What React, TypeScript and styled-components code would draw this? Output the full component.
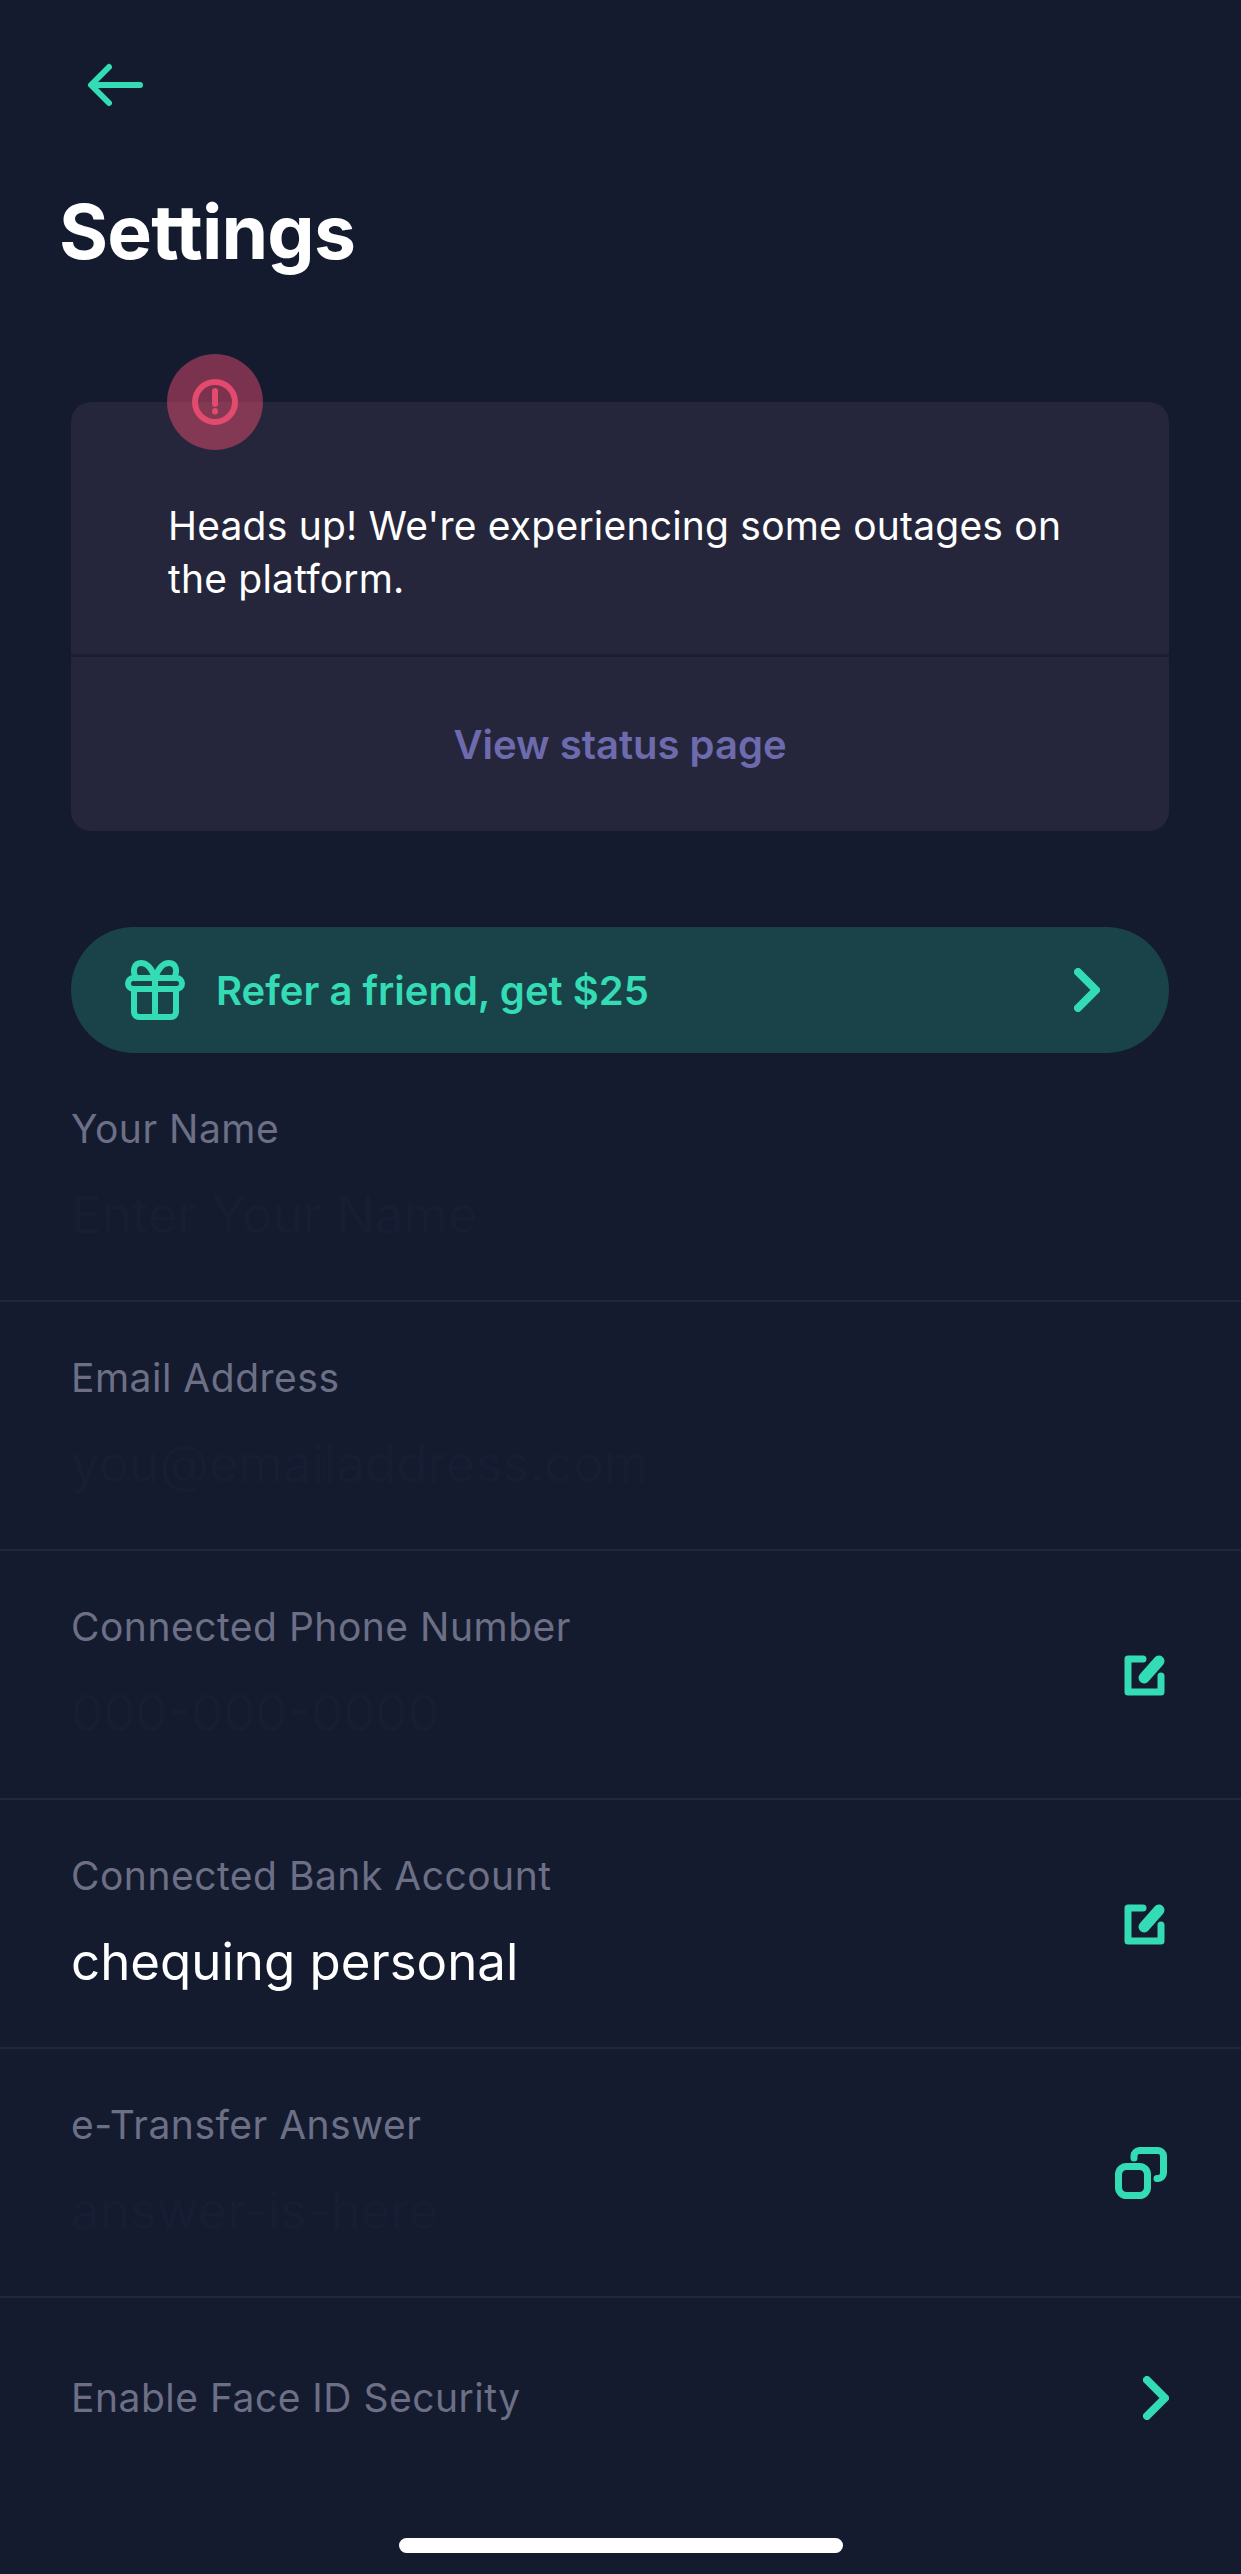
import React, { FC } from "react";
import styled, { createGlobalStyle } from "styled-components";

const colors = {
  bg: "#141b2f",
  card: "#25263b",
  line: "#24273c",
  teal: "#33dcb4",
  pill: "#1a4349",
  label: "#6c6f85",
  hidden: "#171d32",
  link: "#6d6bae",
  pink: "#e24a6e",
};

const GlobalStyle = createGlobalStyle`
  html, body {
    margin: 0;
    padding: 0;
    background: ${colors.bg};
  }
  body {
    font-family: "Inter", "Liberation Sans", sans-serif;
  }
`;

const Page = styled.div`
  width: 1241px;
  height: 2574px;
  overflow: hidden;
  display: flex;
  flex-direction: column;
  background: ${colors.bg};
`;

const BackButton = styled.button`
  display: block;
  align-self: flex-start;
  border: none;
  background: none;
  padding: 0;
  margin: 61px 0 0 86px;
  height: 48px;
`;

const Title = styled.h1`
  margin: 78px 0 0 59px;
  color: #fff;
  font-size: 75px;
  line-height: 90px;
  font-weight: 700;
  letter-spacing: -0.8px;
`;

const Alert = styled.section`
  position: relative;
  margin: 125px 72px 0 71px;
  background: ${colors.card};
  border-radius: 20px;
`;

const AlertBadge = styled.div`
  position: absolute;
  left: 96px;
  top: -48px;
  width: 96px;
  height: 96px;
  border-radius: 50%;
  background: rgba(226, 74, 110, 0.5);
  display: flex;
  align-items: center;
  justify-content: center;
`;

const AlertText = styled.p`
  margin: 0;
  height: 252px;
  box-sizing: border-box;
  padding: 97px 90px 0 97px;
  color: #fff;
  font-size: 39px;
  line-height: 53px;
  font-weight: 400;
  letter-spacing: 0.2px;
`;

const AlertAction = styled.div`
  height: 174px;
  border-top: 3px solid #1c1d31;
  display: flex;
  align-items: center;
  justify-content: center;
  color: ${colors.link};
  font-size: 40px;
  font-weight: 600;
`;

const ReferPill = styled.div`
  margin: 96px 72px 0 71px;
  height: 126px;
  border-radius: 63px;
  background: ${colors.pill};
  display: flex;
  align-items: center;
  padding: 0 69px 0 54px;
  color: ${colors.teal};
  font-size: 40px;
  font-weight: 600;
`;

const ReferLabel = styled.span`
  flex: 1;
  margin-left: 31px;
`;

const Row = styled.div<{ $last?: boolean }>`
  height: ${(p) => (p.$last ? 200 : 247)}px;
  display: flex;
  align-items: center;
  justify-content: space-between;
  padding: 0 72px 0 71px;
  border-bottom: ${(p) => (p.$last ? "none" : `2px solid ${colors.line}`)};
`;

const RowText = styled.div`
  display: flex;
  flex-direction: column;
  gap: 34px;
  padding-bottom: 3px;
`;

const Label = styled.div`
  color: ${colors.label};
  font-size: 39px;
  line-height: 46px;
  letter-spacing: 0.5px;
`;

const Value = styled.div<{ $hidden?: boolean }>`
  color: ${(p) => (p.$hidden ? colors.hidden : "#fff")};
  font-size: 51px;
  line-height: 58px;
`;

const RowIcon = styled.div<{ $inset?: number }>`
  display: flex;
  margin-right: ${(p) => p.$inset ?? 0}px;
`;

const Rows = styled.div`
  display: flex;
  flex-direction: column;
`;

const HomeBar = styled.div`
  align-self: center;
  width: 444px;
  height: 15px;
  border-radius: 8px;
  background: #fff;
  margin-top: 40px;
`;

const Arrow = () => (
  <svg width="60" height="48" viewBox="0 0 60 48" fill="none" stroke={colors.teal} strokeWidth="6" strokeLinecap="round" strokeLinejoin="round">
    <path d="M54 24H6M23 6L5 24l18 18" />
  </svg>
);

const AlertIcon = () => (
  <svg width="46" height="46" viewBox="0 0 46 46" fill="none" stroke={colors.pink} strokeWidth="6" strokeLinecap="round">
    <circle cx="23" cy="23" r="20" />
    <path d="M23 12v13" />
    <path d="M23 32v.5" />
  </svg>
);

const GiftIcon = () => (
  <svg width="60" height="60" viewBox="0 0 60 60" fill="none" stroke={colors.teal} strokeWidth="6" strokeLinecap="round" strokeLinejoin="round">
    <rect x="3" y="18" width="54" height="11" rx="5.5" />
    <path d="M9 29v23a5 5 0 0 0 5 5h32a5 5 0 0 0 5-5V29" />
    <path d="M30 16v41" />
    <path d="M30 18C27 9 22 3 16 3 9 3 7 11 11 18" />
    <path d="M30 18c3-9 8-15 14-15 7 0 9 8 5 15" />
  </svg>
);

const Chevron: FC<{ size?: number }> = ({ size = 44 }) => (
  <svg width={(size * 26) / 44} height={size} viewBox="0 0 26 44" fill="none" stroke={colors.teal} strokeWidth="8" strokeLinecap="round" strokeLinejoin="round">
    <path d="M4 4l18 18L4 40" />
  </svg>
);

const EditIcon = () => (
  <svg width="42" height="42" viewBox="0 0 42 42" fill="none" strokeLinecap="round" strokeLinejoin="round">
    <path d="M20 5H5v33h33V22" stroke={colors.teal} strokeWidth="7" />
    <path d="M21 24L36 7" stroke={colors.teal} strokeWidth="11" />
  </svg>
);

const CopyIcon = () => (
  <svg width="52" height="52" viewBox="0 0 52 52" fill="none" stroke={colors.teal} strokeWidth="7" strokeLinecap="round" strokeLinejoin="round">
    <rect x="3.5" y="19.5" width="29" height="29" rx="8" />
    <path d="M19 11V9a5.500 5.500 0 0 1 5.500-5.500H43A5.500 5.500 0 0 1 48.500 9v17a5.500 5.500 0 0 1-5.500 5.500h-1" />
  </svg>
);

const rows = [
  { label: "Your Name", value: "Enter Your Name", hidden: true },
  { label: "Email Address", value: "you@emailaddress.com", hidden: true },
  { label: "Connected Phone Number", value: "000-000-0000", hidden: true, icon: <EditIcon />, inset: 4 },
  { label: "Connected Bank Account", value: "chequing personal", icon: <EditIcon />, inset: 4 },
  { label: "e-Transfer Answer", value: "answer-is-here", hidden: true, icon: <CopyIcon />, inset: 2 },
];

export default function App() {
  return (
    <Page>
      <GlobalStyle />
      <BackButton>
        <Arrow />
      </BackButton>
      <Title>Settings</Title>
      <Alert>
        <AlertBadge>
          <AlertIcon />
        </AlertBadge>
        <AlertText>Heads up! We're experiencing some outages on the platform.</AlertText>
        <AlertAction>View status page</AlertAction>
      </Alert>
      <ReferPill>
        <GiftIcon />
        <ReferLabel>Refer a friend, get $25</ReferLabel>
        <Chevron />
      </ReferPill>
      <Rows>
        {rows.map((row) => (
          <Row key={row.label}>
            <RowText>
              <Label>{row.label}</Label>
              <Value $hidden={row.hidden}>{row.value}</Value>
            </RowText>
            {row.icon && <RowIcon $inset={row.inset}>{row.icon}</RowIcon>}
          </Row>
        ))}
        <Row $last>
          <Label>Enable Face ID Security</Label>
          <Chevron />
        </Row>
      </Rows>
      <HomeBar />
    </Page>
  );
}
